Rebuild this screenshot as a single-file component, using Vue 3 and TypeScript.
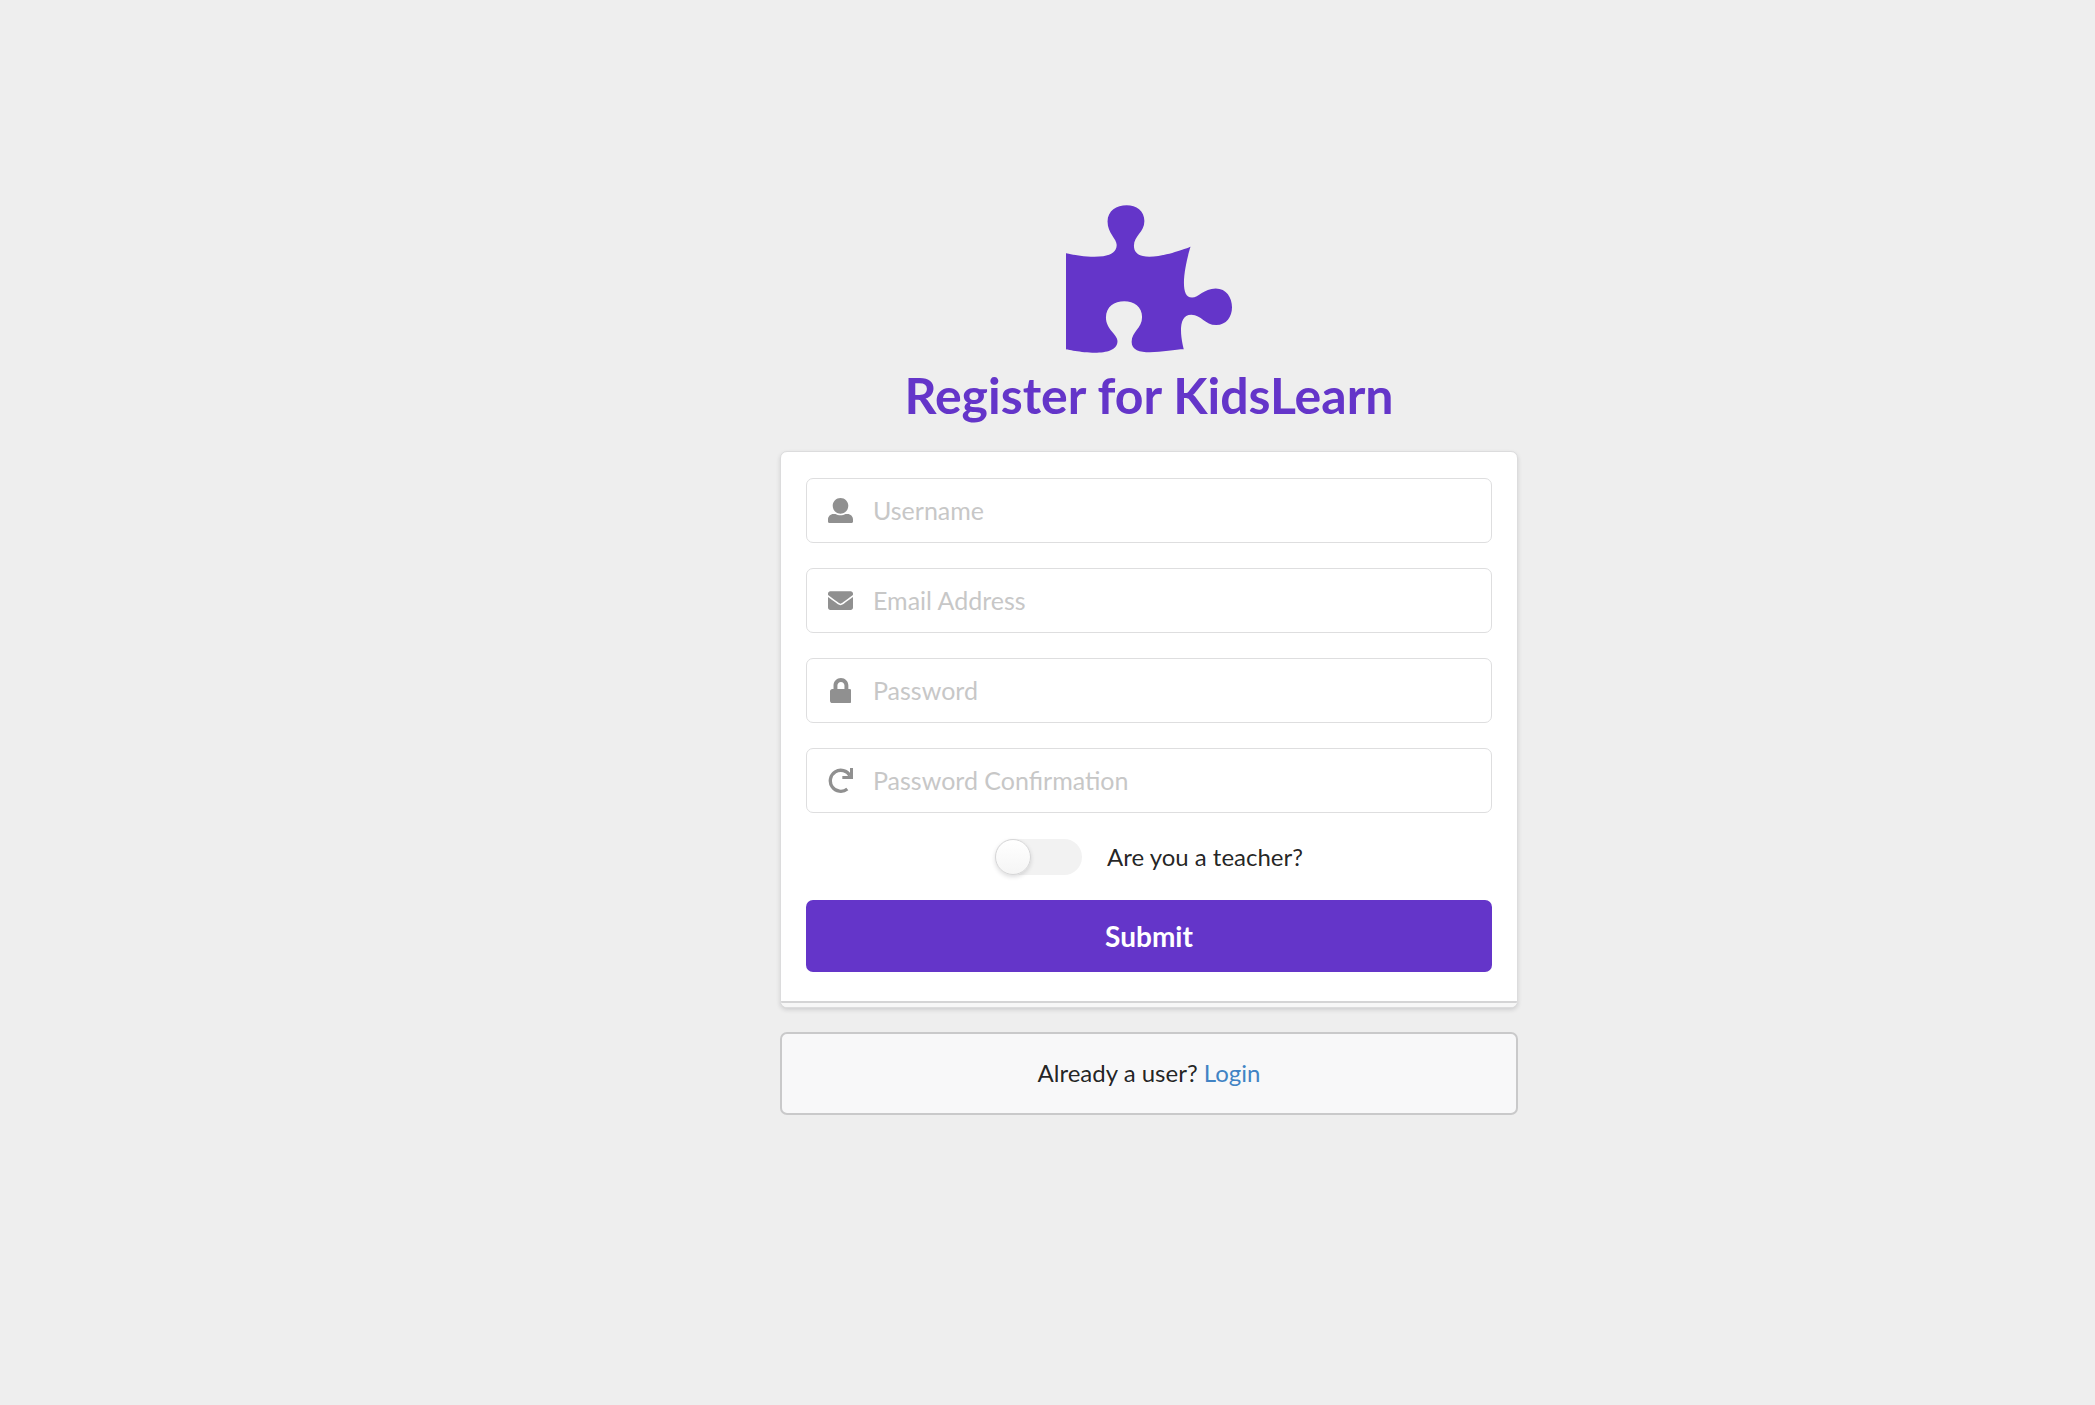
<script setup lang="ts">
import { reactive } from 'vue'

interface Field {
  id: 'username' | 'email' | 'password' | 'confirmation'
  label: string
  type: string
  viewBox: string
  path: string
}

const fields: Field[] = [
  {
    id: 'username',
    label: 'Username',
    type: 'text',
    viewBox: '0 0 512 512',
    path: 'M96 160C96 71.634 167.635 0 256 0s160 71.634 160 160-71.635 160-160 160S96 248.366 96 160zM400 328h-40c-60 36-148 36-208 0h-40C50 328 0 378 0 440v48c0 13 11 24 24 24h464c13 0 24-11 24-24v-48c0-62-50-112-112-112z',
  },
  {
    id: 'email',
    label: 'Email Address',
    type: 'email',
    viewBox: '0 0 512 512',
    path: 'M502.3 190.8c3.9-3.1 9.7-.2 9.7 4.7V400c0 26.5-21.5 48-48 48H48c-26.5 0-48-21.5-48-48V195.6c0-5 5.7-7.8 9.7-4.7 22.4 17.4 52.1 39.5 154.1 113.6 21.1 15.4 56.7 47.8 92.2 47.6 35.7.3 72-32.8 92.3-47.6 102-74.1 131.6-96.3 154-113.7zM256 320c23.2.4 56.6-29.2 73.4-41.4 132.7-96.3 142.8-104.7 173.4-128.7 5.8-4.5 9.2-11.5 9.2-18.9v-19c0-26.5-21.5-48-48-48H48c-26.5 0-48 21.5-48 48v19c0 7.4 3.4 14.3 9.2 18.9 30.6 23.9 40.7 32.4 173.4 128.7 16.8 12.2 50.2 41.8 73.4 41.4z',
  },
  {
    id: 'password',
    label: 'Password',
    type: 'password',
    viewBox: '0 0 448 512',
    path: 'M400 224h-24v-72C376 68.2 307.8 0 224 0S72 68.2 72 152v72H48c-26.5 0-48 21.5-48 48v192c0 26.5 21.5 48 48 48h352c26.5 0 48-21.5 48-48V272c0-26.5-21.5-48-48-48zm-104 0H152v-72c0-39.7 32.3-72 72-72s72 32.3 72 72v72z',
  },
  {
    id: 'confirmation',
    label: 'Password Confirmation',
    type: 'password',
    viewBox: '0 0 75 75',
    path: 'M70.3 20.6A36.5 36.5 0 1 0 61.1 67L54.9 59.2A26.5 26.5 0 1 1 61.6 25.5ZM66 0v24H43v9h32V0z',
  },
]

const form = reactive({
  username: '',
  email: '',
  password: '',
  confirmation: '',
  teacher: false,
})
</script>

<template>
  <main class="page">
    <div class="column">
      <header class="heading">
        <svg class="logo" viewBox="0 0 576 512" aria-hidden="true">
          <path
            d="M519.442 288.651c-41.519 0-59.5 31.593-82.058 31.593C377.409 320.244 432 144 432 144s-196.288 80-196.288-3.297c0-35.827 36.288-46.25 36.288-85.985C272 19.216 243.885 0 210.539 0c-34.654 0-66.366 18.891-66.366 56.346 0 41.364 31.711 59.277 31.711 81.75C175.885 207.719 0 166.758 0 166.758v333.237s178.635 41.047 178.635-28.662c0-22.473-40-40.107-40-81.471 0-37.456 29.25-56.346 63.577-56.346 33.673 0 61.788 19.216 61.788 54.717 0 39.735-36.288 50.158-36.288 85.985 0 60.803 129.675 25.73 181.23 25.73 0 0-34.725-120.101 25.827-120.101 35.962 0 46.423 36.152 86.308 36.152C556.712 416 576 387.99 576 354.443c0-34.199-18.962-65.792-56.558-65.792z"
          />
        </svg>
        <h1>Register for KidsLearn</h1>
      </header>

      <form class="card" @submit.prevent>
        <div v-for="field in fields" :key="field.id" class="field">
          <label :for="field.id" class="field-icon" :aria-label="field.label">
            <svg :viewBox="field.viewBox" aria-hidden="true"><path :d="field.path" /></svg>
          </label>
          <input
            :id="field.id"
            v-model="form[field.id]"
            :type="field.type"
            :placeholder="field.label"
          />
        </div>
        <label class="toggle">
          <input v-model="form.teacher" type="checkbox" />
          <span>Are you a teacher?</span>
        </label>
        <button type="submit">Submit</button>
      </form>

      <p class="message">Already a user? <a href="#login">Login</a></p>
    </div>
  </main>
</template>

<style>
body {
  margin: 0;
  background: #eeeeee;
}
</style>

<style scoped>
.page {
  box-sizing: border-box;
  min-height: 100vh;
  padding: 205px 0 40px 203px;
  font-family: Lato, "Liberation Sans", sans-serif;
  font-size: 24px;
  line-height: 36px;
  color: rgba(0, 0, 0, 0.87);
}
.column {
  max-width: 738px;
  margin: 0 auto;
}
.heading {
  display: flex;
  flex-direction: column;
  align-items: center;
  color: #6435c9;
}
.logo {
  width: 166px;
  height: 148px;
  fill: currentColor;
}
h1 {
  margin: 10px 0 24px;
  font-size: 50px;
  line-height: 64px;
  font-weight: 700;
}
.card {
  position: relative;
  display: flex;
  flex-direction: column;
  gap: 25px;
  padding: 26px 25px 35px;
  border: 1px solid #dcdcdd;
  border-radius: 7px;
  background: #fff;
  box-shadow: 0 2px 4px rgba(34, 36, 38, 0.15);
}
.card::after {
  content: "";
  position: absolute;
  right: 0;
  bottom: 0;
  left: 0;
  height: 4px;
  border-top: 2px solid #d4d4d5;
  border-radius: 0 0 6px 6px;
  background: #f7f7f7;
}
.field {
  display: grid;
}
.field > * {
  grid-area: 1 / 1;
}
.field-icon {
  z-index: 1;
  justify-self: start;
  display: grid;
  place-items: center;
  width: 69px;
}
.field-icon svg {
  height: 25px;
  fill: #909090;
}
.field input {
  box-sizing: border-box;
  width: 100%;
  height: 65px;
  padding: 0 24px 2px 66px;
  border: 1px solid #dededf;
  border-radius: 7px;
  background: #fff;
  color: inherit;
  font: inherit;
  font-size: 25px;
  outline: none;
}
.field input::placeholder {
  color: #c7c7c7;
  opacity: 1;
}
.field input:focus {
  border-color: #85b7d9;
}
.toggle {
  align-self: center;
  display: flex;
  align-items: center;
  gap: 25px;
  padding-top: 1px;
  cursor: pointer;
}
.toggle input {
  appearance: none;
  width: 87px;
  height: 36px;
  margin: 0;
  border-radius: 18px;
  background: #f2f2f2;
  cursor: pointer;
}
.toggle input::before {
  content: "";
  display: block;
  box-sizing: border-box;
  width: 36px;
  height: 36px;
  border: 1px solid #d6d6d7;
  border-radius: 50%;
  background: linear-gradient(#fff, #f5f5f5);
  box-shadow: 0 2px 4px rgba(34, 36, 38, 0.15);
}
.toggle input:checked {
  background: #6435c9;
}
.toggle input:checked::before {
  margin-left: auto;
}
button {
  height: 72px;
  padding: 0 24px;
  border: 0;
  border-radius: 7px;
  background: #6435c9;
  color: #fff;
  font: inherit;
  font-size: 28px;
  font-weight: 700;
  cursor: pointer;
}
.message {
  margin: 24px 0 0;
  padding: 21px 25px 22px;
  border: 2px solid #c9c9ca;
  border-radius: 7px;
  background: #f8f8f9;
  text-align: center;
}
a {
  color: #4183c4;
  text-decoration: none;
}
</style>
